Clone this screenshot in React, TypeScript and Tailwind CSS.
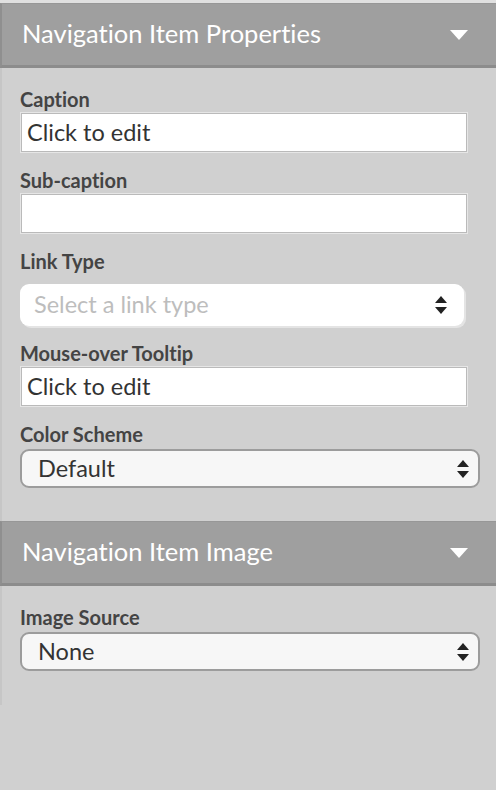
const Caret = () => (
  <svg width="18" height="10" viewBox="0 0 18 10" className="block">
    <path d="M0 0 H18 L9 10 Z" fill="#ffffff" />
  </svg>
);

const Sort = ({ className }: { className?: string }) => (
  <svg width="14" height="20" viewBox="0 0 14 20" className={className}>
    <path d="M7 1 L13 8 H1 Z" fill="#222" />
    <path d="M1 12 H13 L7 19 Z" fill="#222" />
  </svg>
);

const Header = ({ title }: { title: string }) => (
  <div className="h-[65px] bg-[#9f9f9f] border-t border-[#979797] border-l-2 border-l-[#8f8f8f] border-b-[3px] border-b-[#8c8c8c] flex items-center justify-between pl-[20px] pr-[28px]">
    <span className="text-white text-[25.5px] leading-none pb-[1px]">{title}</span>
    <Caret />
  </div>
);

const Label = ({ children }: { children: string }) => (
  <div className="text-[20px] font-bold text-[#444] leading-[20px]">{children}</div>
);

const TextInput = ({ value }: { value?: string }) => (
  <div className="mt-[3px] w-[448px] h-[41px] bg-white border border-[#e6e6e6] shadow-[inset_0_0_0_1px_#bababa] flex items-center px-[6px] text-[23.5px] text-[#333]">
    {value}
  </div>
);

const Select = ({ value }: { value: string }) => (
  <div className="mt-[5px] w-[460px] h-[39px] bg-[#f7f7f7] border-2 border-[#9c9c9c] rounded-[9px] flex items-center justify-between pl-[16px] pr-[8px] text-[23.5px] text-[#333]">
    <span>{value}</span>
    <Sort />
  </div>
);

export default function App() {
  return (
    <div className="w-[496px] h-[790px] bg-[#d0d0d0] font-['Lato',sans-serif] [font-variant-ligatures:none]">
      <div className="h-[3px] bg-[#e0e0e0]" />
      <Header title="Navigation Item Properties" />
      <div className="border-l-2 border-[#c6c6c6] pl-[18px] pt-[21px] pb-[33px]">
        <Label>Caption</Label>
        <TextInput value="Click to edit" />
        <div className="h-[17px]" />
        <Label>Sub-caption</Label>
        <TextInput />
        <div className="h-[17px]" />
        <Label>Link Type</Label>
        <div className="mt-[13px] w-[444px] h-[42px] bg-white rounded-[9px] shadow-[2px_2px_0_0_#e4e4e4] flex items-center justify-between pl-[14px] pr-[16px] text-[23.5px] text-[#bdbdbd]">
          <span>Select a link type</span>
          <Sort />
        </div>
        <div className="h-[17px]" />
        <Label>Mouse-over Tooltip</Label>
        <TextInput value="Click to edit" />
        <div className="h-[17px]" />
        <Label>Color Scheme</Label>
        <Select value="Default" />
      </div>
      <Header title="Navigation Item Image" />
      <div className="border-l-2 border-[#c6c6c6] pl-[18px] pt-[21px] pb-[34px]">
        <Label>Image Source</Label>
        <Select value="None" />
      </div>
    </div>
  );
}
